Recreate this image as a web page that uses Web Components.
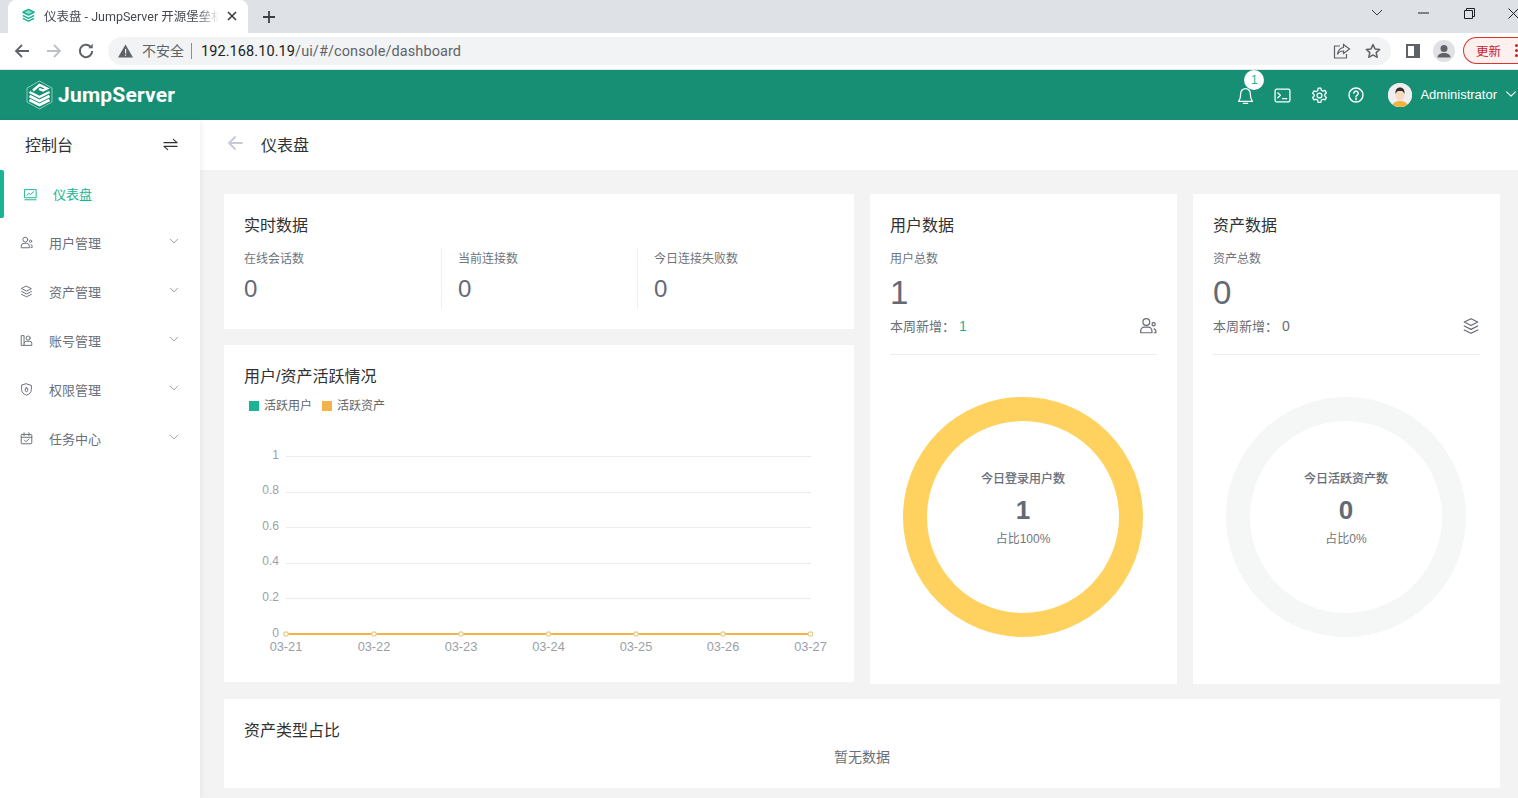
<!DOCTYPE html>
<html lang="zh"><head><meta charset="utf-8"><title>仪表盘 - JumpServer</title>
<style>
html,body{margin:0;height:798px;overflow:hidden;background:#f3f3f4;font-family:"Liberation Sans","Noto Sans CJK SC",sans-serif}
*{box-sizing:border-box}
</style></head><body>
<x-app></x-app>
<script>
const ICONS={
 users:'<circle cx="6.5" cy="4.5" r="3"/><path d="M1.5 14v-1.5a3.5 3.5 0 0 1 3.5-3.5h3a3.5 3.5 0 0 1 3.5 3.5V14z"/><circle cx="13" cy="6.5" r="1.4"/><path d="M13.5 10.5a2.4 2.4 0 0 1 1.5 2.2V14h-1.5"/>',
 layers:'<path d="M8 1.5l6 3-6 3-6-3z"/><path d="M2 8l6 3 6-3"/><path d="M2 11.5l6 3 6-3"/>',
 account:'<path d="M2 2h3v12H2z"/><circle cx="10" cy="5" r="2.5"/><path d="M5 14h9.5v-2.5a2.5 2.5 0 0 0-2.5-2.5H8a3 3 0 0 0-3 2"/>',
 shield:'<path d="M8 1l6 2v5c0 3.5-2.5 6-6 7-3.5-1-6-3.5-6-7V3z"/><rect x="6.5" y="6" width="3" height="4.5" rx="1.2"/>',
 task:'<rect x="1.5" y="3" width="13" height="11.5" rx="1"/><path d="M1.5 6.5h13M5 1v3.5M11 1v3.5M5.5 10l2 2 3.5-3.5"/>',
 dash:'<rect x="1" y="2" width="14" height="10"/><path d="M3.5 9l2.5-2.5 2 1.5 4-3.5M1 14.5h14"/>',
 chev:'<path d="M3 5.5l5 5 5-5"/>',
 bell:'<path d="M8 1.5a4.5 4.5 0 0 0-4.5 4.5c0 4-.5 5.5-2 7.5h13c-1.5-2-2-3.5-2-7.5A4.5 4.5 0 0 0 8 1.5z"/><path d="M6 15.5h4"/>',
 term:'<rect x="1" y="2" width="14" height="12" rx="1.5"/><path d="M3.5 5.5l2.5 2.3-2.5 2.3M8 11h4"/>',
 gear:'<path d="M6.7 1h2.6l.4 2 1.6.9 1.9-.7 1.3 2.3-1.5 1.3v1.8l1.5 1.3-1.3 2.3-1.9-.7-1.6.9-.4 2H6.7l-.4-2-1.6-.9-1.9.7-1.3-2.3 1.5-1.3V7.3L1.5 6l1.3-2.3 1.9.7 1.6-.9z"/><circle cx="8" cy="8" r="2.3"/>',
 help:'<circle cx="8" cy="8" r="7"/><path d="M5.8 6.2a2.2 2.2 0 1 1 3.4 1.900c-.8.5-1.200.9-1.200 1.900"/><path d="M8 11.500v1.300"/>',
 swap:'<path d="M1 6h14l-4-3.500M15 10H1l4 3.500"/>',
 back:'<path d="M15 8H2M8 2L2 8l6 6"/>'
};
function svgIcon(n,s,w){return `<svg width="${s}" height="${s}" viewBox="0 0 16 16" fill="none" stroke="currentColor" stroke-width="${w||1.3}" stroke-linejoin="round" stroke-linecap="round" style="display:block">${ICONS[n]}</svg>`}

class XIcon extends HTMLElement{constructor(){super();
 const s=+this.getAttribute('size')||14,w=this.getAttribute('weight');
 this.attachShadow({mode:'open'}).innerHTML=`<style>:host{display:block;width:${s}px;height:${s}px;flex:none}</style>${svgIcon(this.getAttribute('name'),s,w)}`}}
customElements.define('x-icon',XIcon);

class XBrowser extends HTMLElement{constructor(){super();
 this.attachShadow({mode:'open'}).innerHTML=`<style>
 :host{display:block;font-family:Roboto,"Noto Sans CJK SC",sans-serif}
 *{box-sizing:border-box}
 .strip{height:33px;background:#dee1e6;display:flex;align-items:flex-end;padding-left:8px;position:relative}
 .tab{width:240px;height:33px;background:#fff;border-radius:8px 8px 0 0;display:flex;align-items:center;padding:0 10px 2px 13px;font-size:12.5px;color:#45494e}
 .tab .t{margin-left:8px;width:175px;white-space:nowrap;overflow:hidden;-webkit-mask-image:linear-gradient(90deg,#000 88%,transparent);mask-image:linear-gradient(90deg,#000 88%,transparent)}
 .tab .x{margin-left:7px}
 .plus{margin:0 0 9px 14px}
 .win{margin-left:auto;display:flex;align-items:center;height:26px;align-self:flex-start;width:164px;position:relative}
 .win svg{position:absolute}
 .bar{background:#fff;display:flex;align-items:center;padding-left:14px;border-bottom:1px solid #e3e5e8;height:37px}
 .nav{display:flex;gap:16px;width:88px;flex:none;align-items:center}
 .nav svg:last-child{margin-left:-1px}
 .omni{width:1283px;flex:none;margin-left:6px;height:28px;background:#f1f3f4;border-radius:14px;display:flex;align-items:center;padding-left:10px;margin-top:-1px}
 .warn{font-size:14px;color:#5f6368;margin:0 0 2px 9px}
 .div{width:1px;height:16px;background:#8b8f94;margin:0 9px 0 7px}
 .url{font-size:14.5px;color:#5f6368;letter-spacing:.006em;margin-top:2px}
 .url b{font-weight:400;color:#202124}
 .omr{margin-left:auto;display:flex;gap:14px;padding-right:10px}
 .right{display:flex;align-items:center;margin-left:15px;flex:none;margin-top:-1px}
 .ava{width:22px;height:22px;border-radius:50%;background:#dfe1e5;margin-left:13px;overflow:hidden}
 .upd{margin-left:8px;width:70px;height:27px;border:1px solid #d9362b;border-right:0;border-radius:14px 0 0 14px;background:#fdf0ef;color:#c5221f;font-size:12.5px;padding-left:12px;white-space:nowrap;display:flex;align-items:center}
 .dots{margin-left:14px;display:grid;gap:2px}
 .dots i{width:3px;height:3px;background:#c5221f;border-radius:50%;display:block}
 </style>
 <div class="strip">
  <div class="tab">
   <svg width="15" height="15" viewBox="0 0 16 16" fill="none" stroke="#1ab394" stroke-width="1.6" stroke-linejoin="round"><path d="M8 1.5l6 3-6 3-6-3z" fill="#8fdcc9"/><path d="M2 8l6 3 6-3M2 11l6 3 6-3"/></svg>
   <span class="t">仪表盘 - JumpServer 开源堡垒机</span>
   <svg class="x" width="12" height="12" viewBox="0 0 12 12" stroke="#3c4043" stroke-width="1.7"><path d="M2 2l8 8M10 2l-8 8"/></svg>
  </div>
  <svg class="plus" width="14" height="14" viewBox="0 0 14 14" stroke="#3c4043" stroke-width="1.8"><path d="M7 1v12M1 7h12"/></svg>
  <div class="win">
   <svg style="left:17px;top:9px" width="12" height="8" viewBox="0 0 12 8" fill="none" stroke="#3c4043"><path d="M1 1l5 5 5-5"/></svg>
   <svg style="left:64px;top:12px" width="11" height="2" viewBox="0 0 11 2" stroke="#202124"><path d="M0 1h11"/></svg>
   <svg style="left:110px;top:8px" width="11" height="11" viewBox="0 0 11 11" fill="none" stroke="#202124"><path d="M.5 2.5h8v8h-8zM2.5 2.5v-2h8v8h-2"/></svg>
   <svg style="left:154px;top:8px" width="10" height="11" viewBox="0 0 10 11" stroke="#202124"><path d="M.5.5l10 10M10.500.5l-10 10"/></svg>
  </div>
 </div>
 <div class="bar">
  <div class="nav">
   <svg width="16" height="16" viewBox="0 0 16 16" fill="none" stroke="#5f6368" stroke-width="1.8"><path d="M15 8H2M8 2L2 8l6 6"/></svg>
   <svg width="16" height="16" viewBox="0 0 16 16" fill="none" stroke="#bdc1c6" stroke-width="1.8"><path d="M1 8h13M8 2l6 6-6 6"/></svg>
   <svg width="18" height="18" viewBox="0 0 16 16" fill="none" stroke="#5f6368" stroke-width="1.8"><path d="M13.5 8A5.500 5.500 0 1 1 12 4.200"/><path d="M14 1.500v4h-4z" fill="#5f6368" stroke="none"/></svg>
  </div>
  <div class="omni">
   <svg width="15" height="14" viewBox="0 0 15 14"><path d="M7.500 .5L15 13.500H0z" fill="#5f6368"/><path d="M7 5h1.200v4.500H7zM7 10.500h1.200v1.300H7z" fill="#f1f3f4"/></svg>
   <span class="warn">不安全</span><span class="div"></span>
   <span class="url"><b>192.168.10.19</b>/ui/#/console/dashboard</span>
   <div class="omr">
    <svg width="18" height="16" viewBox="0 0 18 16" fill="none" stroke="#5f6368" stroke-width="1.2"><path d="M7 3H1.500v12h12v-4"/><path d="M10.500 1.500L16.500 6l-6 4.500V8c-3 0-5 1-6 3.500C5 7.500 7 5 10.500 4.500z"/></svg>
    <svg width="16" height="16" viewBox="0 0 16 16" fill="none" stroke="#5f6368" stroke-width="1.5" stroke-linejoin="round"><path d="M8 1.500l2 4.400 4.700.5-3.500 3.200 1 4.700L8 11.900l-4.200 2.400 1-4.700L1.300 6.400 6 5.900z"/></svg>
   </div>
  </div>
  <div class="right">
   <svg width="14" height="14" viewBox="0 0 14 14" fill="none" stroke="#5f6368" stroke-width="2"><rect x="1" y="1" width="12" height="12"/><rect x="9" y="1" width="4" height="12" fill="#5f6368"/></svg>
   <div class="ava"><svg width="22" height="22" viewBox="0 0 22 22" fill="#5f6368" style="display:block"><circle cx="11" cy="8.500" r="3.500"/><path d="M4.500 17.500c0-3 3-4.500 6.500-4.500s6.500 1.500 6.500 4.500z"/></svg></div>
   <div class="upd">更新<span class="dots"><i></i><i></i><i></i></span></div>
  </div>
 </div>`}}
customElements.define('x-browser',XBrowser);

class XTopbar extends HTMLElement{constructor(){super();
 this.attachShadow({mode:'open'}).innerHTML=`<style>
 :host{display:flex;align-items:center;height:50px;background:#178f74;color:#fff;padding-left:26px;flex:none}
 .logo{display:flex;align-items:center;gap:5px;font:700 21px Roboto,sans-serif;letter-spacing:.2px}
 .r{margin-left:auto;display:flex;align-items:center}
 .ic{position:relative;width:37px;display:flex;justify-content:center}
 .ic.g{width:36px}
 .badge{position:absolute;left:17px;top:-17px;width:20px;height:20px;border-radius:50%;background:#fff;color:#1ab394;font-size:12px;line-height:20px;text-align:center}
 .av{width:24px;height:24px;border-radius:50%;overflow:hidden;background:#efefef;margin-left:14px;flex:none}
 .name{font-size:13px;margin:0 0 2px 8px}
 .ch{margin:-2px 0 0 7px}
 </style>
 <div class="logo"><svg width="27" height="30" viewBox="0 0 27 30" fill="none" stroke="#fff" style="display:block"><path d="M13.500 1L26 8v14l-12.500 7L1 22V8z" stroke-width=".8" opacity=".65"/><path d="M3.500 16l10 5 10-5" stroke-width="2.600"/><path d="M3.500 20l10 5 10-5" stroke-width="2.600"/><path d="M3.500 12l10 5 10-5M7 10.500l6.500-5.500 7.500 3.500-4 2-4-1.700" stroke-width="2.400"/></svg><span>JumpServer</span></div>
 <div class="r">
  <div class="ic"><x-icon name="bell" size="17" weight="1.2"></x-icon><span class="badge">1</span></div>
  <div class="ic"><x-icon name="term" size="17" weight="1.2"></x-icon></div>
  <div class="ic g"><x-icon name="gear" size="17" weight="1.2"></x-icon></div>
  <div class="ic"><x-icon name="help" size="16" weight="1.4"></x-icon></div>
  <div class="av"><svg width="24" height="24" viewBox="0 0 24 24" style="display:block"><rect width="24" height="24" fill="#efefef"/><path d="M4 24c0-4 4-6 8-6s8 2 8 6z" fill="#f2b23e"/><ellipse cx="12" cy="12" rx="4.500" ry="5.500" fill="#f8d9c2"/><path d="M7.500 11c-.5-5 2-6.500 4.500-6.500s5 1.500 4.500 6.500c-1-2.500-2-3-4.500-3s-3.500.5-4.500 3z" fill="#33302e"/></svg></div>
  <span class="name">Administrator</span>
  <x-icon class="ch" name="chev" size="14" weight="1.2"></x-icon>
 </div>`}}
customElements.define('x-topbar',XTopbar);

class XNavItem extends HTMLElement{constructor(){super();
 const act=this.hasAttribute('active');
 this.attachShadow({mode:'open'}).innerHTML=`<style>
 :host{display:flex;align-items:center;height:49px;font-size:13px;color:${act?'#1ab394':'#6a6f78'};padding-left:${act?24:20}px;position:relative}
 :host([active]){height:48px}
 :host([active])::before{content:"";position:absolute;left:0;top:0;bottom:0;width:4px;background:#1ab394;border-radius:0 2px 2px 0}
 .l{margin-left:16px;margin-bottom:1px}
 x-icon.c{margin-left:auto;margin-right:20px;color:#858b94;margin-top:-3px}
 </style><x-icon name="${this.getAttribute('icon')}" size="13" weight="1.2"></x-icon><span class="l"><slot></slot></span>${act?'':'<x-icon class="c" name="chev" size="12" weight="1.1"></x-icon>'}`}}
customElements.define('x-nav-item',XNavItem);

class XSidebar extends HTMLElement{constructor(){super();
 this.attachShadow({mode:'open'}).innerHTML=`<style>
 :host{display:block;width:200px;flex:none;background:#fff;box-shadow:2px 0 6px rgba(0,0,0,.05);position:relative;z-index:1}
 .h{box-sizing:border-box;height:50px;display:flex;align-items:center;justify-content:space-between;padding:0 22px 2px 25px;font-size:16px;color:#303133}
 </style><div class="h"><span>控制台</span><x-icon name="swap" size="15" weight="1.2"></x-icon></div><slot></slot>`}}
customElements.define('x-sidebar',XSidebar);

class XCrumb extends HTMLElement{constructor(){super();
 this.attachShadow({mode:'open'}).innerHTML=`<style>
 :host{display:flex;align-items:center;height:50px;background:#fff;padding:0 0 2px 27px;font-size:16px;color:#303133;flex:none;box-sizing:border-box}
 x-icon{color:#c5cad6;margin-right:18px;margin-top:-3px}
 </style><x-icon name="back" size="16" weight="1.8"></x-icon><slot></slot>`}}
customElements.define('x-crumb',XCrumb);

class XCard extends HTMLElement{constructor(){super();
 this.attachShadow({mode:'open'}).innerHTML=`<style>
 :host{display:block;box-sizing:border-box;background:#fff;padding:22px 20px 0;min-width:0}
 h3{margin:0;font-weight:400;font-size:16px;line-height:20px;color:#303133}
 </style><h3>${this.getAttribute('heading')}</h3><slot></slot>`}}
customElements.define('x-card',XCard);

class XStat extends HTMLElement{constructor(){super();
 this.attachShadow({mode:'open'}).innerHTML=`<style>
 :host{display:block;box-sizing:border-box;height:61px;color:#6f747c;font-size:12px;line-height:22px}
 :host(:not(:first-child)){border-left:1px solid #eef0f1;padding-left:16px}
 .n{font-size:24px;line-height:28px;margin-top:5px;color:#636a75}
 </style><div>${this.getAttribute('label')}</div><div class="n">${this.getAttribute('value')}</div>`}}
customElements.define('x-stat',XStat);

class XStatRow extends HTMLElement{constructor(){super();
 this.attachShadow({mode:'open'}).innerHTML=`<style>:host{display:grid;grid-template-columns:197px 196px 1fr;margin-top:12px}</style><slot></slot>`}}
customElements.define('x-stat-row',XStatRow);

class XSummary extends HTMLElement{constructor(){super();
 const c=this.getAttribute('accent')||'#676a6c';
 this.attachShadow({mode:'open'}).innerHTML=`<style>
 :host{display:block;color:#6f747c}
 .l{font-size:12px;line-height:22px;margin-top:12px}
 .n{font-size:33px;line-height:40px;margin-top:3px;color:#636a75}
 .f{display:flex;align-items:center;font-size:13px;height:20px;margin-top:3px;color:#6a6f76}
 .t{margin-bottom:2px}
 .v{margin-left:4px;color:${c};font-size:14px}
 x-icon{margin-left:auto;color:#666b73}
 hr{border:0;border-top:1px solid #ebedef;margin:18px 0 0}
 </style><div class="l">${this.getAttribute('label')}</div><div class="n">${this.getAttribute('value')}</div>
 <div class="f"><span class="t">本周新增：</span><span class="v">${this.getAttribute('week')}</span><x-icon name="${this.getAttribute('icon')}" size="18" weight="1.1"></x-icon></div><hr>`}}
customElements.define('x-summary',XSummary);

class XDonut extends HTMLElement{constructor(){super();
 this.attachShadow({mode:'open'}).innerHTML=`<style>
 :host{display:flex;box-sizing:border-box;flex-direction:column;align-items:center;justify-content:center;width:240px;height:240px;border-radius:50%;border:24px solid ${this.getAttribute('color')};margin:42px 0 0 13px;color:#636a75;text-align:center;padding-bottom:16px}
 .a{font-size:12px;font-weight:400;-webkit-text-stroke:.25px #636a75;line-height:18px}
 .b{font-size:26px;font-weight:700;line-height:30px;margin-top:7px}
 .c{font-size:12px;line-height:18px;margin-top:5px;color:#70757d}
 </style><div class="a">${this.getAttribute('title')}</div><div class="b">${this.getAttribute('value')}</div><div class="c">${this.getAttribute('pct')}</div>`}}
customElements.define('x-donut',XDonut);

class XLegend extends HTMLElement{constructor(){super();
 this.attachShadow({mode:'open'}).innerHTML=`<style>
 :host{display:flex;align-items:center;font-size:12px;color:#666;height:20px;margin-top:9px;padding-left:5px}
 i{width:10px;height:10px;display:block;margin-right:5px}
 span{margin:0 10px 4px 0}
 </style><i style="background:#1ab394"></i><span>活跃用户</span><i style="background:#f4b24a"></i><span>活跃资产</span>`}}
customElements.define('x-legend',XLegend);

class XLineChart extends HTMLElement{constructor(){super();
 const xs=[62,150,237,324.5,412,499,586.5],x0=62,x1=587;
 const ys=[['1',40],['0.8',75.6],['0.6',111.2],['0.4',146.8],['0.2',182.4],['0',218]];
 const days=['03-21','03-22','03-23','03-24','03-25','03-26','03-27'];
 let g='';
 ys.forEach(([t,y],i)=>{ if(i<5) g+=`<path d="M${x0} ${Math.round(y)+.5}H${x1}" stroke="#ececee"/>`;
  g+=`<text x="55" y="${y+2.5}" text-anchor="end" font-size="12" fill="#9a9fa8">${t}</text>`});
 g+=`<path d="M${x0} 218H${x1}" stroke="#f4b24a" stroke-width="2"/>`;
 xs.forEach((x,i)=>{g+=`<circle cx="${x}" cy="218" r="2.2" fill="#fff" stroke="#e7cd86" stroke-width="1.2"/><text x="${x}" y="234.5" text-anchor="middle" font-size="12.8" fill="#9a9fa8">${days[i]}</text>`});
 this.attachShadow({mode:'open'}).innerHTML=`<style>:host{display:block;margin:0 -20px}svg{display:block;font-family:"Liberation Sans",sans-serif}</style>
 <svg width="630" height="248" viewBox="0 0 630 248">${g}</svg>`}}
customElements.define('x-line-chart',XLineChart);

class XApp extends HTMLElement{constructor(){super();
 this.attachShadow({mode:'open'}).innerHTML=`<style>
 :host{display:flex;flex-direction:column;height:798px;overflow:hidden}
 .body{display:flex;flex:1;min-height:0}
 main{flex:1;display:flex;flex-direction:column;min-width:0}
 .content{padding:24px 18px 0 24px;display:flex;flex-direction:column;gap:15px}
 .grid{display:grid;grid-template-columns:630px 307px 307px;column-gap:16px;height:490px}
 .left{display:grid;grid-template-rows:135px 337px;row-gap:16px}
 .empty{text-align:center;font-size:14px;color:#6a6f76;margin-top:6px;line-height:20px}
 .bottom{height:89px}
 </style>
 <x-browser></x-browser>
 <x-topbar></x-topbar>
 <div class="body">
  <x-sidebar>
   <x-nav-item active icon="dash">仪表盘</x-nav-item>
   <x-nav-item icon="users">用户管理</x-nav-item>
   <x-nav-item icon="layers">资产管理</x-nav-item>
   <x-nav-item icon="account">账号管理</x-nav-item>
   <x-nav-item icon="shield">权限管理</x-nav-item>
   <x-nav-item icon="task">任务中心</x-nav-item>
  </x-sidebar>
  <main>
   <x-crumb>仪表盘</x-crumb>
   <div class="content">
    <div class="grid">
     <div class="left">
      <x-card heading="实时数据"><x-stat-row>
       <x-stat label="在线会话数" value="0"></x-stat>
       <x-stat label="当前连接数" value="0"></x-stat>
       <x-stat label="今日连接失败数" value="0"></x-stat>
      </x-stat-row></x-card>
      <x-card heading="用户/资产活跃情况"><x-legend></x-legend><x-line-chart></x-line-chart></x-card>
     </div>
     <x-card heading="用户数据">
      <x-summary label="用户总数" value="1" week="1" accent="#1ab394" icon="users"></x-summary>
      <x-donut color="#ffd15e" title="今日登录用户数" value="1" pct="占比100%"></x-donut>
     </x-card>
     <x-card heading="资产数据">
      <x-summary label="资产总数" value="0" week="0" icon="layers"></x-summary>
      <x-donut color="#f4f7f6" title="今日活跃资产数" value="0" pct="占比0%"></x-donut>
     </x-card>
    </div>
    <x-card class="bottom" heading="资产类型占比"><div class="empty">暂无数据</div></x-card>
   </div>
  </main>
 </div>`}}
customElements.define('x-app',XApp);
</script>
</body></html>
